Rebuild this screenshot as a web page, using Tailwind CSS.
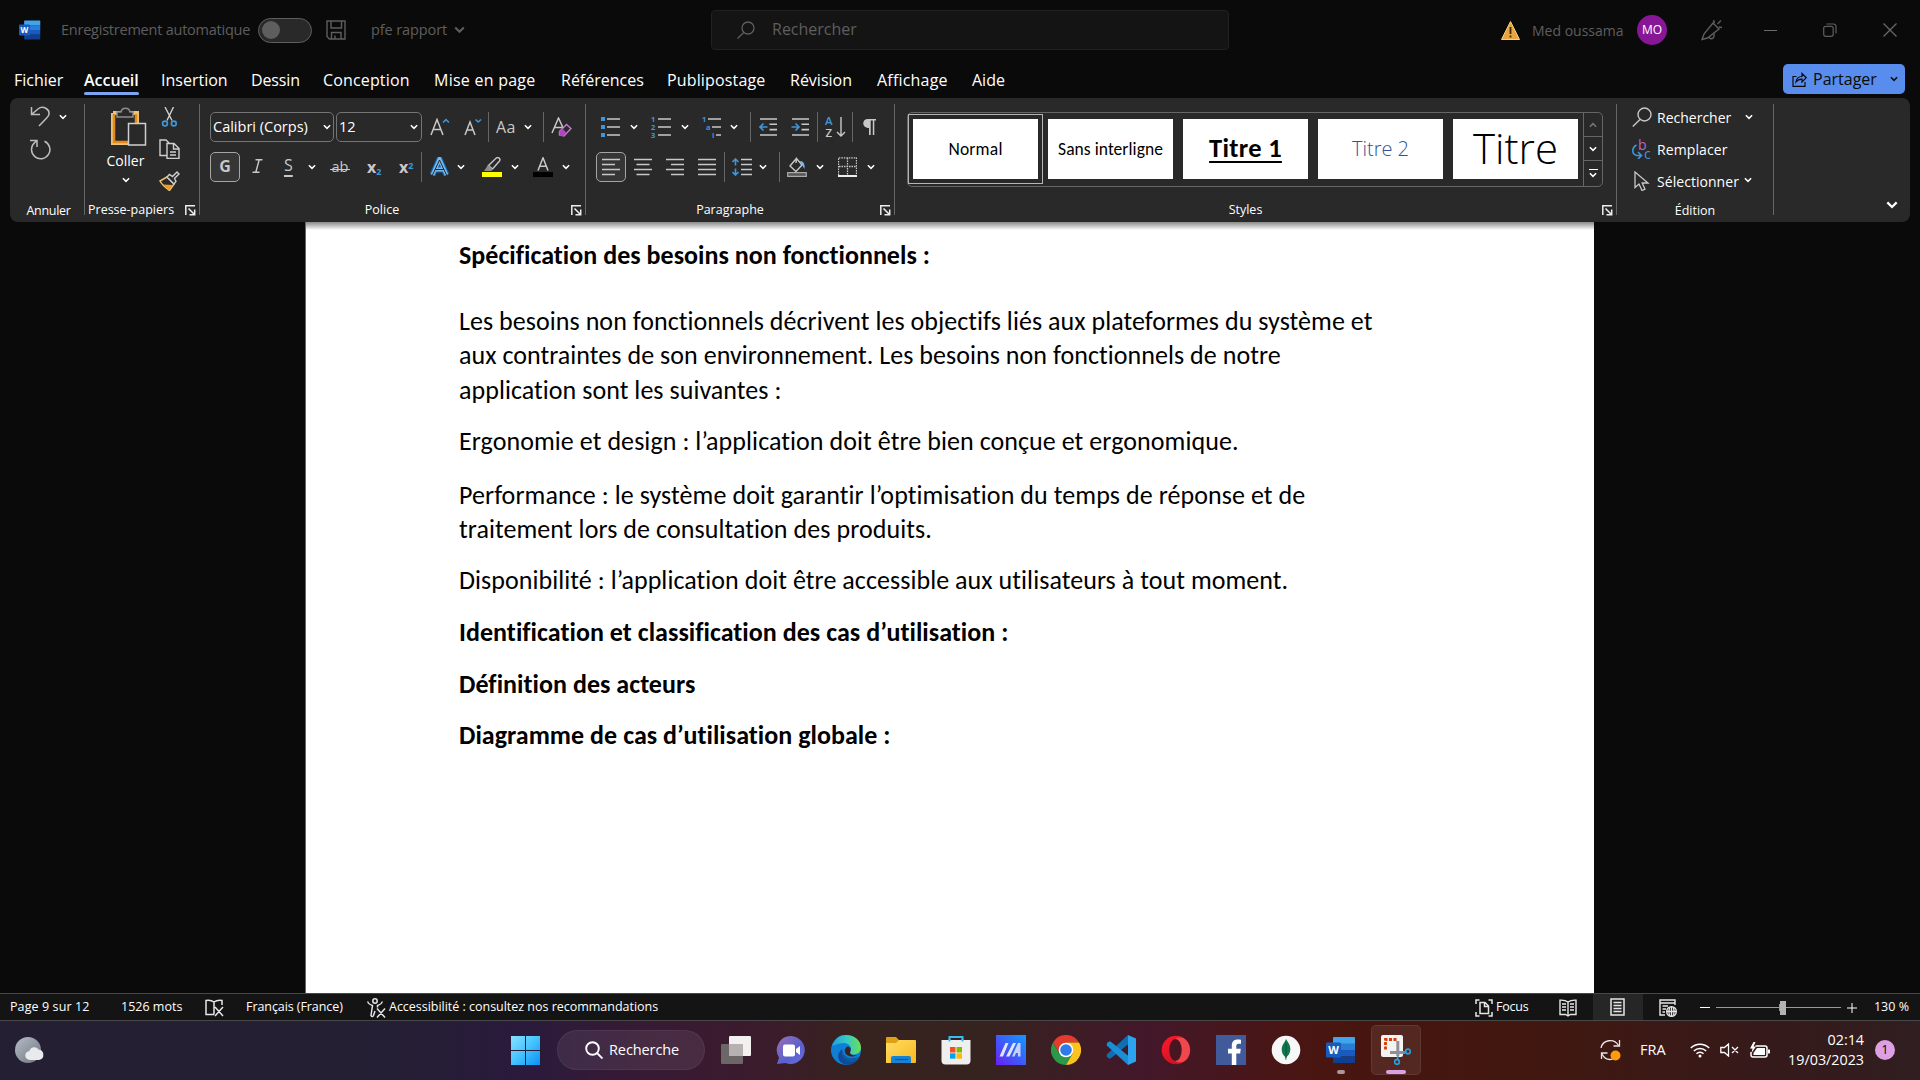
<!DOCTYPE html>
<html lang="fr">
<head>
<meta charset="utf-8">
<title>pfe rapport - Word</title>
<script src="https://cdn.jsdelivr.net/npm/@tailwindcss/browser@4"></script>
</head>
<body class="w-[1920px] h-[1080px] overflow-hidden bg-[#0a0a0a] text-white font-['Open_Sans',sans-serif] whitespace-nowrap flex flex-col">
<svg class="hidden">
  <symbol id="chev" viewBox="0 0 9 6"><path d="M1 1l3.500 3.500L8 1" fill="none" stroke="currentColor" stroke-width="1.700"/></symbol>
  <symbol id="launch" viewBox="0 0 11 11"><path d="M.8 10V.8H10M3.500 3.500l6 6M9.700 4.500v5.200H4.500" fill="none" stroke="#eee" stroke-width="1.500"/></symbol>
  <symbol id="word" viewBox="0 0 30 28">
    <path fill="#41a5ee" d="M8 1h20a1 1 0 0 1 1 1v6H7V2a1 1 0 0 1 1-1z"/><path fill="#2b7cd3" d="M7 7.500h22v7H7z"/><path fill="#185abd" d="M7 14h22v6.500H7z"/><path fill="#103f91" d="M7 20.500h22V26a1 1 0 0 1-1 1H8a1 1 0 0 1-1-1z"/>
    <rect y="6.500" width="15" height="15" rx="1.300" fill="#185abd"/>
    <text x="7.500" y="18" font-size="11" font-weight="700" text-anchor="middle" fill="#fff" font-family="Open Sans, sans-serif">W</text>
  </symbol>
</svg>

<!-- Title bar -->
<header class="h-[60px] flex items-center shrink-0 text-[#5e5e5e] text-[14.5px]">
  <svg class="ml-[19px] w-[22px] h-[22px]"><use href="#word"/></svg>
  <span class="ml-5 w-[197px] tracking-[-0.23px]">Enregistrement automatique</span>
  <span class="w-[54px] h-[25px] rounded-full border border-[#5e5e5e] bg-[#292929] flex items-center pl-[3px]"><i class="w-[18px] h-[18px] rounded-full bg-[#5e5e5e]"></i></span>
  <svg class="ml-[14px] w-5 h-5" viewBox="0 0 20 20" fill="none" stroke="#5e5e5e" stroke-width="1.400"><path d="M1 1h18v18H3.500L1 16.500zM5 1v7h10.500V1M5.500 19v-6.500h9.500V19M9 19v-3.500"/></svg>
  <span class="ml-[25px] w-[83px] tracking-[-0.100px]">pfe rapport</span>
  <svg class="w-[11px] h-[8px]"><use href="#chev"/></svg>
  <div class="ml-[246px] w-[518px] h-10 rounded-[4px] border border-[#212121] bg-[#141414] flex items-center pl-[25px] text-base">
    <svg class="w-[18px] h-[18px]" viewBox="0 0 18 18" fill="none" stroke="#5e5e5e" stroke-width="1.300"><circle cx="11" cy="7" r="6"/><path d="M6.800 11.500L.5 17.500"/></svg>
    <span class="ml-[17px] -mt-0.5">Rechercher</span>
  </div>
  <svg class="ml-[272px] w-[19px] h-[19px]" viewBox="0 0 19 19"><path d="M9.500.5L18.500 18.500H.5z" fill="#eaa43c" stroke="#f5cf86" stroke-width="1"/><path d="M9.500 6v7M9.500 14.500v2" stroke="#3a2a10" stroke-width="1.800"/></svg>
  <span class="ml-3 w-[105px] text-[14px]">Med oussama</span>
  <span class="w-[30px] h-[30px] rounded-full bg-[#881798] text-white text-[12px] flex items-center justify-center">MO</span>
  <svg class="ml-[34px] w-[21px] h-[21px]" viewBox="0 0 21 21" fill="none" stroke="#5e5e5e" stroke-width="1.400"><path d="M12 3L3 14l-2 5.500L6.500 18 18 9zM8 17c1 2.500 4 2.500 5-.5v-3M12.500 0l1 3M20 .5l-3.500 3.500M21 7.500l-3-.5"/></svg>
  <i class="ml-[42px] w-[13px] h-px bg-[#6a6a6a]"></i>
  <svg class="ml-[46px] w-[14px] h-[14px]" viewBox="0 0 14 14" fill="none" stroke="#5e5e5e" stroke-width="1.200"><rect x=".7" y="3.300" width="9.500" height="10" rx="2"/><path d="M3.500 1h7a2.500 2.500 0 0 1 2.500 2.500v7"/></svg>
  <svg class="ml-[46px] w-[14px] h-[14px]" viewBox="0 0 14 14" stroke="#6a6a6a" stroke-width="1.200"><path d="M.5.5l13 13M13.500.5l-13 13"/></svg>
</header>

<!-- Ribbon tabs -->
<nav class="h-[38px] shrink-0 flex items-start pl-[14px] text-base leading-[22px]">
  <span class="mt-[9px] w-[70px]">Fichier</span>
  <span class="mt-[9px] w-[77px] font-semibold">Accueil<i class="block mt-[1px] w-[55px] h-[3px] rounded-full bg-[#7aa5f0]"></i></span>
  <span class="mt-[9px] w-[90px]">Insertion</span>
  <span class="mt-[9px] w-[72px] tracking-[-0.150px]">Dessin</span>
  <span class="mt-[9px] w-[111px] tracking-[0.150px]">Conception</span>
  <span class="mt-[9px] w-[127px] tracking-[0.250px]">Mise en page</span>
  <span class="mt-[9px] w-[106px]">Références</span>
  <span class="mt-[9px] w-[123px] tracking-[0.150px]">Publipostage</span>
  <span class="mt-[9px] w-[87px]">Révision</span>
  <span class="mt-[9px] w-[95px] tracking-[0.200px]">Affichage</span>
  <span class="mt-[9px] flex-1">Aide</span>
  <div class="mt-1 mr-[15px] w-[122px] h-[30px] rounded-[5px] bg-[#588ded] text-[#0a0a0a] flex items-center pl-[9px]">
    <svg class="w-[15px] h-[15px]" viewBox="0 0 15 15" fill="none" stroke="#0a0a0a" stroke-width="1.200"><path d="M4.500 4.500H1v9.800h12V10M4 10c.5-4 3-5.500 6-5.500V1.500l4.300 4.200L10 10V7.200C7.500 7.200 5.500 8 4 10z"/></svg>
    <span class="ml-1.5 w-[77px]">Partager</span>
    <svg class="w-2 h-1.5"><use href="#chev"/></svg>
  </div>
</nav>

<!-- Ribbon -->
<section class="relative z-10 mx-[10px] h-[124px] shrink-0 rounded-lg bg-[#292929] flex items-start">
  <div class="w-[74px] h-full flex flex-col">
    <div class="h-[102px] pt-2 pl-5">
      <div class="flex items-start">
        <svg class="w-5 h-[21px]" viewBox="0 0 20 21" fill="none" stroke="#bdbdbd" stroke-width="1.500"><path d="M1.500 1v7.500H10M1.500 8.500L8 3c5-4 13 .5 10.500 6.500-.5 1.500-2 3-9.500 10.500"/></svg>
        <svg class="ml-[9px] mt-[8px] w-2 h-[6px]"><use href="#chev"/></svg>
      </div>
      <svg class="mt-[12px] w-[21px] h-[21px]" viewBox="0 0 21 21" fill="none" stroke="#bdbdbd" stroke-width="1.500"><path d="M0 1.500h7V8M14.500 2.200A9.200 9.200 0 1 1 4.500 3.800L7 1.500"/></svg>
    </div>
    <div class="h-5 text-[12.5px] leading-[22px] text-center pl-[3px] tracking-[-0.300px]">Annuler</div>
  </div>
  <i class="mt-1.5 w-px h-[111px] bg-[#666]"></i>

  <div class="w-[114px] h-full flex flex-col">
    <div class="h-[102px] flex">
      <div class="w-[74px] pt-[9px] pl-[11px] flex flex-col items-center">
        <svg class="ml-[2px] w-[36px] h-[40px]" viewBox="0 0 36 40" fill="none"><path d="M2 6h24v14M2 6v30h15" stroke="#e9c37c" stroke-width="4"/><path d="M3 7v28h14M25 7v11" stroke="#e58a1a" stroke-width="2.500"/><path d="M6 10V5h4c1-5 8-5 9 0h3v5z" fill="#292929" stroke="#8d8d8d" stroke-width="1.500"/><path d="M17.500 16.500h17v21.500h-17z" fill="#292929" stroke="#cfcfcf" stroke-width="1.500"/></svg>
        <span class="mt-[2px] mr-[4px] text-[14px] leading-6">Coller</span>
        <svg class="mt-[4px] mr-[4px] w-2 h-1.5"><use href="#chev"/></svg>
      </div>
      <div class="pt-[9px] flex flex-col gap-[12px]">
        <svg class="w-[21px] h-5" viewBox="0 0 21 20" fill="none" stroke="#cfcfcf" stroke-width="1.400"><path d="M6 0l7 13.500M14.500 0L8 13.500"/><circle cx="6" cy="16.500" r="2.400" stroke="#3f96da" stroke-width="1.700"/><circle cx="14.800" cy="16.500" r="2.400" stroke="#3f96da" stroke-width="1.700"/></svg>
        <svg class="w-[21px] h-[20px]" viewBox="0 0 21 20" fill="none" stroke="#cfcfcf" stroke-width="1.400"><path d="M7.500 16.500H1V1h6l3 3M8 4.500h7l5 5v10H8zM14.500 4.500V10H20M11 13h6M11 16h6"/></svg>
        <svg class="w-[21px] h-[20px]" viewBox="0 0 21 20" fill="none"><path d="M1 10l7-4 7 7-4.500 6.500C7 17 3 14 1 10z" fill="#292929" stroke="#edc173" stroke-width="1.500"/><path d="M4 13.500l10 .5-4 5z" fill="#f09a28"/><path d="M8 6l2.500-2.500 3 2L18 1l2 2-4.500 4.500 1.500 3L15 13z" fill="#292929" stroke="#cfcfcf" stroke-width="1.400"/></svg>
      </div>
    </div>
    <div class="h-5 text-[12.5px] leading-5 flex items-center pl-[3px]"><span class="w-[97px]">Presse-papiers</span><svg class="w-[11px] h-[11px]"><use href="#launch"/></svg></div>
  </div>
  <i class="mt-1.5 w-px h-[111px] bg-[#666]"></i>

  <!-- Police -->
  <div class="w-[385px] h-full flex flex-col">
    <div class="h-[102px] pt-[14px] pl-[10px] flex flex-col gap-[10px]">
      <div class="h-[30px] flex items-center text-[#c8c8c8]">
        <div class="w-[124px] h-[30px] border border-[#757575] rounded-[5px] flex items-center pl-[2px] text-white text-[14.5px]"><span class="w-[110px]">Calibri (Corps)</span><svg class="w-2 h-1.5"><use href="#chev"/></svg></div>
        <div class="ml-0.5 w-[86px] h-[30px] border border-[#757575] rounded-[5px] flex items-center pl-[2px] text-white text-[14.5px]"><span class="w-[71px]">12</span><svg class="w-2 h-1.5"><use href="#chev"/></svg></div>
        <svg class="ml-2 w-5 h-[18px]" viewBox="0 0 20 18" fill="none"><path d="M1 17L7 1.500 13 17M3.200 11.500h7.700" stroke="#c8c8c8" stroke-width="1.500"/><path d="M13 4.500l3-2.800 3 2.800" stroke="#3f96da" stroke-width="1.600"/></svg>
        <svg class="ml-[14px] w-[18px] h-[18px]" viewBox="0 0 18 18" fill="none"><path d="M1 17L6 4l5 13M3 12h6" stroke="#c8c8c8" stroke-width="1.500"/><path d="M11.500 1.500L14.200 4 17 1.500" stroke="#3f96da" stroke-width="1.600"/></svg>
        <i class="ml-[6px] w-px h-[30px] bg-[#666]"></i>
        <span class="ml-[7px] w-[28px] text-[16px] tracking-[0.500px]">Aa</span><svg class="w-2 h-1.5 text-white"><use href="#chev"/></svg>
        <i class="ml-[11px] w-px h-[30px] bg-[#666]"></i>
        <svg class="ml-[7px] w-[21px] h-5" viewBox="0 0 21 20" fill="none"><path d="M1 16L7.500 1l5.500 12M3.500 10.500h8" stroke="#c8c8c8" stroke-width="1.500"/><path d="M8.500 14.500l7-7 4.500 4-7 7.500-4.500-1z" fill="#292929" stroke="#c678cf" stroke-width="1.500"/><path d="M8.500 14l3-2.500 4 4.500-3 3H9z" fill="#b146c2"/></svg>
      </div>
      <div class="h-[30px] flex items-center text-[#c8c8c8]">
        <div class="w-[30px] h-[30px] rounded-[5px] border border-[#a5a5a5] bg-[#363636] flex items-center justify-center font-bold text-[16px] pb-0.5">G</div>
        <svg class="ml-[12px] w-[11px] h-[14px] -mt-0.5" viewBox="0 0 11 14" fill="none" stroke="#c8c8c8" stroke-width="1.400"><path d="M3.500.7H10.500M.5 13.300H7.500M7.200.7L3.800 13.300"/></svg>
        <span class="ml-[21px] w-[24px] text-[16px] underline underline-offset-4 decoration-2 leading-none -mt-1">S</span>
        <svg class="w-2 h-1.5 text-white"><use href="#chev"/></svg>
        <span class="ml-[14px] w-5 h-5 relative text-[14.5px] leading-5 text-center">ab<i class="absolute inset-x-0 top-[12px] h-px bg-[#c8c8c8]"></i></span>
        <span class="ml-[17px] w-[32px] font-bold text-[16px] leading-none">x<sub class="text-[9px] text-[#3f96da]">2</sub></span>
        <span class="w-[22px] font-bold text-[16px] leading-none">x<sup class="text-[9px] text-[#3f96da]">2</sup></span>
        <i class="w-px h-[30px] bg-[#666]"></i>
        <svg class="ml-[7px] w-[21px] h-[20px]" viewBox="0 0 21 20" fill="none"><path d="M3.500 18L10.500 2l7 16M6 12.500h9" stroke="#1664b0" stroke-width="6"/><path d="M3.500 18L10.500 2l7 16M6 12.500h9" stroke="#74b8f0" stroke-width="3.800"/><path d="M3.500 18L10.500 3l7 15M6 12.500h9" stroke="#292929" stroke-width="1"/></svg>
        <svg class="ml-[7px] w-2 h-1.5 text-white"><use href="#chev"/></svg>
        <svg class="ml-[17px] w-5 h-5" viewBox="0 0 20 20" fill="none"><path d="M6.500 8.500L14.500.8c2-1 4.500 1 3 3.200L10.500 12z" stroke="#c8c8c8" stroke-width="1.400"/><path d="M6 8l5 4.500-2 1.500H2z" fill="#8d8d8d"/><path d="M0 15h20v5H0z" fill="#ff0"/></svg>
        <svg class="ml-[9px] w-2 h-1.5 text-white"><use href="#chev"/></svg>
        <svg class="ml-[14px] w-5 h-5" viewBox="0 0 20 20" fill="none"><path d="M5 13.500L10 .8l5 12.700M6.800 9.200h6.500" stroke="#c8c8c8" stroke-width="1.500"/><path d="M0 15h20v5H0z" fill="#000"/></svg>
        <svg class="ml-[9px] w-2 h-1.5 text-white"><use href="#chev"/></svg>
      </div>
    </div>
    <div class="h-5 text-[12.5px] leading-5 flex items-center"><span class="w-[371px] pr-[7px] text-center">Police</span><svg class="w-[11px] h-[11px]"><use href="#launch"/></svg></div>
  </div>
  <i class="mt-1.5 w-px h-[111px] bg-[#666]"></i>

  <!-- Paragraphe -->
  <div class="w-[308px] h-full flex flex-col">
    <div class="h-[102px] pt-[14px] pl-[10px] flex flex-col gap-[10px]">
      <div class="h-[30px] flex items-center">
        <svg class="ml-[5px] w-[19px] h-5" viewBox="0 0 19 20"><path d="M0 0h4v4H0zM0 8h4v4H0zM0 16h4v4H0z" fill="#3f96da"/><path d="M6 2h13M6 10h13M6 18h13" stroke="#c8c8c8" stroke-width="1.600"/></svg>
        <svg class="ml-[10px] w-2 h-1.5"><use href="#chev"/></svg>
        <svg class="ml-[13px] w-5 h-[24px] overflow-visible" viewBox="0 0 20 24"><g font-size="7.500" font-weight="700" fill="#3f96da" font-family="Open Sans, sans-serif"><text y="7">1</text><text y="15">2</text><text y="23">3</text></g><path d="M7 4h13M7 12h13M7 20h13" stroke="#c8c8c8" stroke-width="1.600"/></svg>
        <svg class="ml-[10px] w-2 h-1.5"><use href="#chev"/></svg>
        <svg class="ml-[13px] w-5 h-[24px] overflow-visible" viewBox="0 0 20 24"><g font-size="7.500" font-weight="700" fill="#3f96da" font-family="Open Sans, sans-serif"><text y="7">1</text><text x="4" y="15">a</text><text x="10" y="23">i</text></g><path d="M6 4h13M10 12h9M14 20h5" stroke="#c8c8c8" stroke-width="1.600"/></svg>
        <svg class="ml-[8px] w-2 h-1.5"><use href="#chev"/></svg>
        <i class="ml-[12px] w-px h-[30px] bg-[#666]"></i>
        <svg class="ml-[8px] w-[19px] h-5" viewBox="0 0 19 20" fill="none"><path d="M1 2h17M10.500 7.300H18M10.500 12.600H18M1 18h17" stroke="#c8c8c8" stroke-width="1.600"/><path d="M8.500 10H1M4.500 6.500L1 10l3.500 3.500" stroke="#3f96da" stroke-width="1.600"/></svg>
        <svg class="ml-[13px] w-[19px] h-5" viewBox="0 0 19 20" fill="none"><path d="M1 2h17M10.500 7.300H18M10.500 12.600H18M1 18h17" stroke="#c8c8c8" stroke-width="1.600"/><path d="M.5 10H8M4.500 6.500L8 10l-3.500 3.500" stroke="#3f96da" stroke-width="1.600"/></svg>
        <i class="ml-[7px] w-px h-[30px] bg-[#666]"></i>
        <svg class="ml-[7px] w-[21px] h-[24px] overflow-visible" viewBox="0 0 21 24"><g font-size="11.500" font-weight="600" font-family="Open Sans, sans-serif"><text y="10" fill="#3f96da">A</text><text x=".5" y="22" fill="#c8c8c8">Z</text></g><path d="M16 2v19M12 17l4 4 4-4" fill="none" stroke="#c8c8c8" stroke-width="1.400"/></svg>
        <i class="ml-[6px] w-px h-[30px] bg-[#666]"></i>
        <svg class="ml-[10px] w-[13px] h-4" viewBox="0 0 13 16"><path d="M13 0v1.500h-1.700V16H9.800V1.500H7.700V16H6V9C-1.500 9-1.500 0 5 0z" fill="#c8c8c8"/></svg>
      </div>
      <div class="h-[30px] flex items-center">
        <div class="w-[30px] h-[30px] rounded-[5px] border border-[#a5a5a5] bg-[#363636] flex items-center justify-center"><svg class="w-[18px] h-[18px]" viewBox="0 0 18 18" stroke="#c8c8c8" stroke-width="1.600"><path d="M0 1.500h18M0 6.500h13M0 11.500h18M0 16.500h13"/></svg></div>
        <svg class="ml-[8px] w-[18px] h-[18px]" viewBox="0 0 18 18" stroke="#c8c8c8" stroke-width="1.600"><path d="M0 1.500h18M2.500 6.500h13M0 11.500h18M2.500 16.500h13"/></svg>
        <svg class="ml-[14px] w-[18px] h-[18px]" viewBox="0 0 18 18" stroke="#c8c8c8" stroke-width="1.600"><path d="M0 1.500h18M5 6.500h13M0 11.500h18M5 16.500h13"/></svg>
        <svg class="ml-[14px] w-[18px] h-[18px]" viewBox="0 0 18 18" stroke="#c8c8c8" stroke-width="1.600"><path d="M0 1.500h18M0 6.500h18M0 11.500h18M0 16.500h18"/></svg>
        <i class="ml-[8px] w-px h-[30px] bg-[#666]"></i>
        <svg class="ml-[7px] w-5 h-[18px]" viewBox="0 0 20 18" fill="none"><path d="M9 1.500h11M9 6.500h11M9 11.500h11M9 16.500h11" stroke="#c8c8c8" stroke-width="1.600"/><path d="M3.500 7.500V1M.5 4l3-3 3 3M3.500 10.500V17M.5 14l3 3 3-3" stroke="#3f96da" stroke-width="1.600"/></svg>
        <svg class="ml-[7px] w-2 h-1.5"><use href="#chev"/></svg>
        <i class="ml-[12px] w-px h-[30px] bg-[#666]"></i>
        <svg class="ml-[7px] w-[20px] h-[20px]" viewBox="0 0 20 20" fill="none"><path d="M8 3l-5 6 6 5.500L15 8 9.500 1.500 9 6M9.500 1.500L8 3" stroke="#c8c8c8" stroke-width="1.400"/><path d="M13 4c3 0 5 2 4.500 8L15 8z" fill="#74b8f0"/><path d="M.7 15.700h18.600v3.600H.7z" fill="#555" stroke="#aaa" stroke-width="1.200"/></svg>
        <svg class="ml-[9px] w-2 h-1.5"><use href="#chev"/></svg>
        <svg class="ml-[14px] w-[19px] h-[20px]" viewBox="0 0 19 20" fill="none" stroke="#c8c8c8"><path d="M.5 18V.8h18V18M9.500 1v17M1 9.500h17" stroke-width="1.300" stroke-dasharray="1.500 1"/><path d="M0 19h19" stroke="#eee" stroke-width="2"/></svg>
        <svg class="ml-[10px] w-2 h-1.5"><use href="#chev"/></svg>
      </div>
    </div>
    <div class="h-5 text-[12.5px] leading-5 flex items-center"><span class="w-[294px] pr-[6px] text-center">Paragraphe</span><svg class="w-[11px] h-[11px]"><use href="#launch"/></svg></div>
  </div>
  <i class="mt-1.5 w-px h-[111px] bg-[#666]"></i>

  <!-- Styles -->
  <div class="w-[721px] h-full flex flex-col">
    <div class="h-[102px] pt-[14px] pl-[12px]">
      <div class="w-[696px] h-[75px] rounded-[5px] border border-[#666] flex items-start text-black font-['Carlito','Lato',sans-serif]">
        <div class="mt-[1px] w-[135px] h-[70px] border border-[#b5b5b5] p-1"><div class="h-full bg-white flex items-center justify-center text-[17.500px] tracking-[0.200px]">Normal</div></div>
        <div class="ml-[5px] mt-[6px] w-[125px] h-[60px] bg-white flex items-center justify-center text-[17.500px] tracking-[0.050px]">Sans interligne</div>
        <div class="ml-[10px] mt-[6px] w-[125px] h-[60px] bg-white flex items-center justify-center text-[26.500px] tracking-[0.300px] font-bold underline decoration-2 underline-offset-4">Titre 1</div>
        <div class="ml-[10px] mt-[6px] w-[125px] h-[60px] bg-white flex items-center justify-center text-[20px] font-light text-[#2f5597] font-['Open_Sans',sans-serif]">Titre 2</div>
        <div class="ml-[10px] mt-[6px] w-[125px] h-[60px] bg-white flex items-center justify-center text-[42px] leading-none pb-[3px] font-light font-['Open_Sans',sans-serif]">Titre</div>
        <div class="ml-[5px] w-[19px] h-full border-l border-[#666] text-white grid grid-rows-[24px_24px_1fr] divide-y divide-[#666]">
          <span class="flex items-center justify-center"><svg class="w-2 h-1.5 rotate-180 text-[#777]"><use href="#chev"/></svg></span>
          <span class="flex items-center justify-center"><svg class="w-2 h-1.5"><use href="#chev"/></svg></span>
          <span class="flex flex-col items-center justify-center gap-[2px]"><i class="w-[9px] h-[1.500px] bg-white"></i><svg class="w-2 h-1.5"><use href="#chev"/></svg></span>
        </div>
      </div>
    </div>
    <div class="h-5 text-[12.5px] leading-5 flex items-center"><span class="w-[707px] pr-[6px] text-center">Styles</span><svg class="w-[11px] h-[11px]"><use href="#launch"/></svg></div>
  </div>
  <i class="mt-1.5 w-px h-[111px] bg-[#666]"></i>

  <!-- Édition -->
  <div class="w-[156px] h-full flex flex-col text-[14px]">
    <div class="h-[102px] pt-[3px] pl-[15px] flex flex-col">
      <div class="h-8 flex items-center"><svg class="w-5 h-5" viewBox="0 0 20 20" fill="none" stroke="#c8c8c8" stroke-width="1.400"><circle cx="12.500" cy="7.500" r="6.500"/><path d="M8 12.500L.8 19.500"/></svg><span class="ml-[5px] w-[88px]">Rechercher</span><svg class="w-2 h-1.5"><use href="#chev"/></svg></div>
      <div class="h-8 flex items-center"><svg class="w-5 h-5" viewBox="0 0 20 20"><g font-size="14" font-family="Open Sans, sans-serif"><text x="6" y="10.500" fill="#b968c4">b</text><text x="12" y="19.500" fill="#3f96da">c</text></g><path d="M4.500 6C-.5 9-.5 15.500 5 16.500h4M6 13l3.500 3.500L6 20" fill="none" stroke="#3f96da" stroke-width="1.600"/></svg><span class="ml-[5px] tracking-[0.100px]">Remplacer</span></div>
      <div class="h-8 flex items-center"><svg class="w-5 h-5" viewBox="0 0 20 20" fill="none" stroke="#c8c8c8" stroke-width="1.300"><path d="M3 1v15.500l4-3.500 3 6.500 3-1.300L10.200 12H16z"/></svg><span class="ml-[5px] w-[87px] tracking-[0.050px]">Sélectionner</span><svg class="w-2 h-1.5 -mt-0.5"><use href="#chev"/></svg></div>
    </div>
    <div class="h-5 text-[12.5px] leading-[22px] text-center">Édition</div>
  </div>
  <i class="mt-1.5 w-px h-[111px] bg-[#666]"></i>
  <svg class="ml-auto mr-[12px] mt-[103px] w-[12px] h-2"><use href="#chev"/></svg>
</section>

<!-- Document -->
<main class="flex-1 flex">
  <article class="relative ml-[305px] w-[1289px] bg-white border-l border-[#666] pl-[153px] pt-[16px] text-black text-[26px] leading-[34px] font-['Carlito','Lato',sans-serif] [font-variant-ligatures:none]">
    <i class="absolute left-0 right-0 top-0 h-2 bg-linear-to-b from-[#8a8a8a] to-white"></i>
    <h2 class="font-bold tracking-[0.030px]">Spécification des besoins non fonctionnels :</h2>
    <p class="mt-8 leading-[34.300px] tracking-[0.050px]">Les besoins non fonctionnels décrivent les objectifs liés aux plateformes du système et<br>aux contraintes de son environnement. Les besoins non fonctionnels de notre<br>application sont les suivantes :</p>
    <p class="mt-[17px] tracking-[0.070px]">Ergonomie et design : l’application doit être bien conçue et ergonomique.</p>
    <p class="mt-5 tracking-[0.078px]">Performance : le système doit garantir l’optimisation du temps de réponse et de<br>traitement lors de consultation des produits.</p>
    <p class="mt-[17px] tracking-[0.060px]">Disponibilité : l’application doit être accessible aux utilisateurs à tout moment.</p>
    <h2 class="mt-[18px] font-bold tracking-[0.040px]">Identification et classification des cas d’utilisation :</h2>
    <h2 class="mt-[18px] font-bold tracking-[0.040px]">Définition des acteurs</h2>
    <h2 class="mt-[17px] font-bold tracking-[0.040px]">Diagramme de cas d’utilisation globale :</h2>
  </article>
</main>

<!-- Status bar -->
<div class="h-[28px] shrink-0 bg-[#141414] border-y border-[#484848] flex items-center text-[12.5px] pl-[10px] pt-px">
  <span class="w-[111px] tracking-[0.100px]">Page 9 sur 12</span>
  <span class="w-[84px]">1526 mots</span>
  <svg class="w-5 h-[18px]" viewBox="0 0 20 18" fill="none" stroke="#e6e6e6" stroke-width="1.500"><path d="M9 15.500V3C7 1.500 5 1 1 1.500v14h8M9 3c2-1.500 4-2 8-1.500V6M10 8l8 9M18 8l-8 9"/></svg>
  <span class="ml-[21px] w-[121px] tracking-[-0.070px]">Français (France)</span>
  <svg class="w-[19px] h-5" viewBox="0 0 19 20" fill="none" stroke="#e6e6e6" stroke-width="1.500"><circle cx="8" cy="3" r="2.200"/><path d="M1 3.500c-.5 2 2 3 4.500 4L4 17.500c1 1.500 2 1 2.500 0L8 13M15 3.500c.5 2-2 3-4.500 4v2M10 10.500l8 9M18 10.500l-8 9"/></svg>
  <span class="ml-[3px] flex-1 tracking-[-0.020px]">Accessibilité : consultez nos recommandations</span>
  <svg class="w-[18px] h-[18px]" viewBox="0 0 18 18" fill="none" stroke="#e6e6e6" stroke-width="1.500"><path d="M1 5V1h3.500M13.500 1H17v4M17 13v4h-3.500M4.500 17H1v-4M5 3.500h5l3.500 3.500v7.500H5zM9.500 3.500V7.500h4"/></svg>
  <span class="ml-[3px] w-[63px] tracking-[-0.200px]">Focus</span>
  <svg class="w-[18px] h-[18px]" viewBox="0 0 18 18" fill="none" stroke="#e6e6e6" stroke-width="1.400"><path d="M9 3C7 1.500 5 1 1 1.200v14.300h5.500L9 17l2.500-1.500H17V1.200C13 1 11 1.500 9 3zM9 3v14M3 5h4M3 8h4M3 11h4M11 5h4M11 8h4M11 11h4"/></svg>
  <div class="ml-4 -mt-px w-[50px] h-[26px] bg-[#262626] flex items-center justify-center"><svg class="w-[15px] h-[18px]" viewBox="0 0 15 18" fill="none" stroke="#e6e6e6" stroke-width="1.500"><path d="M1 1h13v16H1zM3.500 4.500h8M3.500 7.500h8M3.500 10.500h8M3.500 13.500h8"/></svg></div>
  <svg class="ml-4 w-[18px] h-[18px]" viewBox="0 0 18 18" fill="none" stroke="#e6e6e6" stroke-width="1.400"><path d="M6 16H1V1h15v5M1 4h15M3.500 7H9M3.500 10H7M3.500 13H6"/><circle cx="12.500" cy="12.500" r="4.800"/><path d="M12.500 8v9M8 12.500h9M10.500 8.500c-1 3-1 5 0 8M14.500 8.500c1 3 1 5 0 8"/></svg>
  <i class="ml-[23px] w-[10px] h-px bg-white"></i>
  <div class="ml-[6px] w-[125px] flex items-center"><i class="w-[63px] h-px bg-[#999]"></i><i class="w-px h-[7px] bg-[#999]"></i><i class="w-[6px] h-[14px] bg-[#b3b3b3]"></i><i class="flex-1 h-px bg-[#999]"></i></div>
  <svg class="ml-[6px] w-[10px] h-[10px]" viewBox="0 0 10 10" stroke="#fff"><path d="M0 5h10M5 0v10"/></svg>
  <span class="ml-[17px] mr-[11px]">130 %</span>
</div>

<!-- Taskbar -->
<footer class="h-[59px] shrink-0 flex items-center pb-px bg-[linear-gradient(90deg,#251f33_0,#251f35_400px,#2a1a3c_520px,#371a35_640px,#3b1b2c_760px,#37221f_850px,#35231f_980px,#42182a_1140px,#481618_1260px,#48150f_1340px,#401811_1560px,#351a1b_1780px,#301e20_1920px)]">
  <svg class="ml-[14px] w-[30px] h-[28px]" viewBox="0 0 30 28"><defs><linearGradient id="moon" x2="1" y2="1"><stop stop-color="#b7bdc8"/><stop offset="1" stop-color="#6c747c"/></linearGradient></defs><circle cx="14" cy="14" r="13" fill="url(#moon)"/><path d="M16 24a4.500 4.500 0 0 1-.5-9 5 5 0 0 1 9-1.500A5.300 5.300 0 0 1 25 24z" fill="#e8eaee"/></svg>
  <svg class="ml-[467px] w-[29px] h-[29px]" viewBox="0 0 29 29"><defs><linearGradient id="win" x2="1" y2="1"><stop stop-color="#8ae2ff"/><stop offset=".5" stop-color="#44c3fd"/><stop offset="1" stop-color="#0a90f5"/></linearGradient></defs><path d="M0 0h14v14H0zM15 0h14v14H15zM0 15h14v14H0zM15 15h14v14H15z" fill="url(#win)"/></svg>
  <div class="ml-[17px] mr-[3px] w-[148px] h-10 rounded-full bg-white/8 border border-white/5 flex items-center pl-[27px] text-[14.500px]">
    <svg class="w-[18px] h-[18px]" viewBox="0 0 18 18" fill="none" stroke="#fff" stroke-width="1.900"><circle cx="7.500" cy="7.500" r="6.300"/><path d="M12 12l5.500 5.500"/></svg><span class="ml-[6px] tracking-[-0.100px]">Recherche</span>
  </div>
  <!-- Affichage des tâches -->
  <div class="w-[55px] flex justify-center"><svg class="w-[30px] h-[30px]" viewBox="0 0 30 30"><rect x="8" y="1" width="22" height="20" rx="1" fill="#f2f0f0"/><rect y="9" width="22" height="20" rx="1" fill="#6a6766"/><path d="M8 9h14v12H8z" fill="#b5b2b1"/></svg></div>
  <!-- Conversation -->
  <div class="w-[55px] flex justify-center"><svg class="w-[30px] h-[30px]" viewBox="0 0 30 30"><defs><linearGradient id="chat" x2="1" y2="1"><stop stop-color="#9a6fb5"/><stop offset=".6" stop-color="#5a60cf"/><stop offset="1" stop-color="#6a6fe0"/></linearGradient></defs><path d="M15 1a14 14 0 1 1-5.500 27L1 29l2-6.500A14 14 0 0 1 15 1z" fill="url(#chat)"/><rect x="7" y="9.500" width="12" height="12" rx="2" fill="#fff"/><path d="M20 14l4-3v9l-4-3z" fill="#fff"/></svg></div>
  <!-- Edge -->
  <div class="w-[55px] flex justify-center"><svg class="w-[30px] h-[30px]" viewBox="0 0 30 30"><defs><linearGradient id="e1"><stop stop-color="#1fa0d8"/><stop offset=".5" stop-color="#35c8c8"/><stop offset="1" stop-color="#6be052"/></linearGradient></defs><circle cx="15" cy="15" r="15" fill="#0f7fd6"/><path d="M1 11C4 3 9 0 15 0c9 0 15 6 15 12.500 0 5-4 7-7.500 7-3 0-4.500-1.500-3-3.500 2-4-2-8-6.500-8-6 0-10 3-12 3z" fill="url(#e1)"/><path d="M11 16c0 8 6 12 15 8.500C22 32 11 31 8 25c-2-4-.5-8 3-11z" fill="#114a94"/><path d="M12 14c-1 6 4 10 10 9 3 0 5-1 6-2-2 5-7 7-11 5-5-2-7-8-5-12z" fill="#0c59a4"/><path d="M15.500 12c-3 3-2 7.500 2.500 9 3 1 6 .5 8-1-5 1-8-1-6.500-4 1-2-1-5-4-4z" fill="#3a2225"/></svg></div>
  <!-- Explorateur -->
  <div class="w-[55px] flex justify-center"><svg class="w-[30px] h-[30px]" viewBox="0 0 30 30"><defs><linearGradient id="fo" x2="1" y2="1"><stop stop-color="#ffdd66"/><stop offset="1" stop-color="#f8b81c"/></linearGradient></defs><path d="M0 3a1 1 0 0 1 1-1h9l3 3h8v5H0z" fill="#e0a013"/><path d="M0 8h10l3-3h16a1 1 0 0 1 1 1v21a1 1 0 0 1-1 1H0z" fill="url(#fo)"/><path d="M5 28v-5a2 2 0 0 1 2-2h16a2 2 0 0 1 2 2v5z" fill="#1783d4"/><path d="M9 24.500h13" stroke="#0c56a0" stroke-width="1.200"/></svg></div>
  <!-- Store -->
  <div class="w-[55px] flex justify-center"><svg class="w-[30px] h-[30px]" viewBox="0 0 30 30"><path d="M8.500 7V2h13v5" fill="none" stroke="#35bdf2" stroke-width="2"/><path d="M.5 5h29v20.500a4 4 0 0 1-4 4h-21a4 4 0 0 1-4-4z" fill="#f0efef"/><path d="M8.500 6.500V4M21.500 6.500V4" stroke="#35bdf2" stroke-width="2"/><path d="M9 12h5.500v5.500H9z" fill="#f25022"/><path d="M15.500 12H21v5.500h-5.500z" fill="#7fba00"/><path d="M9 18.300h5.500v5.400H9z" fill="#00a4ef"/><path d="M15.500 18.300H21v5.400h-5.500z" fill="#ffb900"/></svg></div>
  <!-- MyASUS -->
  <div class="w-[55px] flex justify-center"><svg class="w-[30px] h-[30px]" viewBox="0 0 30 30"><defs><linearGradient id="as" x1="0" y1="1" x2="1" y2="0"><stop stop-color="#6a20f5"/><stop offset="1" stop-color="#109bff"/></linearGradient></defs><path d="M0 0h30v30H0z" fill="url(#as)"/><path d="M3.500 21.500L9.500 8h3L7 21.500zM10 21.500L17 8h3l-6.500 13.500z" fill="#dfe6ff"/><path d="M16 21.500L22 8h2.500v13.500H22V18h-2l-1.500 3.500z" fill="#c5d2ff"/></svg></div>
  <!-- Chrome -->
  <div class="w-[55px] flex justify-center"><svg class="w-[30px] h-[30px]" viewBox="0 0 30 30"><path d="M2 7.500A15 15 0 0 1 28 7.500H15L8.500 18.750z" fill="#e33b2e"/><path d="M2 7.500A15 15 0 0 0 15 30l6.500-11.250h-13z" fill="#2a9a48"/><path d="M28 7.500A15 15 0 0 1 15 30l6.500-11.250L15 7.500z" fill="#fcc31e"/><circle cx="15" cy="15" r="7.300" fill="#fff"/><circle cx="15" cy="15" r="5.800" fill="#2f7bea"/></svg></div>
  <!-- VS Code -->
  <div class="w-[55px] flex justify-center"><svg class="w-[30px] h-[30px]" viewBox="0 0 30 30"><path d="M22 0L.8 19.500v2.200L3 23.500h1.500L22.500 9z" fill="#0f6fb3"/><path d="M22 30L.8 10.500V8.300L3 6.500h1.500L22.500 21z" fill="#1a8fd8"/><path d="M22 0l8 3.500v23L22 30z" fill="#2ba3ee"/></svg></div>
  <!-- Opera -->
  <div class="w-[55px] flex justify-center"><svg class="w-[30px] h-[30px]" viewBox="0 0 30 30"><defs><linearGradient id="op" x2="1" y2="1"><stop stop-color="#ff1b2d"/><stop offset="1" stop-color="#c00d1e"/></linearGradient></defs><circle cx="15" cy="15" r="14.300" fill="url(#op)"/><path d="M14 4c8-5 15 3 15 11s-7 16-15 11z" fill="#f0474c"/><ellipse cx="14.500" cy="15" rx="6.200" ry="11" fill="#471620"/></svg></div>
  <!-- Facebook -->
  <div class="w-[55px] flex justify-center"><svg class="w-[30px] h-[30px]" viewBox="0 0 30 30"><path d="M0 0h30v30H0z" fill="#415a99"/><path d="M15.800 30V18.500H12v-4.700h3.800v-3.300c0-4 2.400-6 5.800-6 1.600 0 2.800.1 3.400.2v4.100h-2.300c-1.900 0-2.400 1-2.400 2.300v2.700h4.500l-.6 4.700h-3.900V30z" fill="#fff"/></svg></div>
  <!-- MongoDB -->
  <div class="w-[55px] flex justify-center"><svg class="w-[30px] h-[30px]" viewBox="0 0 30 30"><circle cx="15" cy="15" r="14.300" fill="#f7f7f7"/><path d="M15 4c2 3.500 4.800 6 4.300 11-.3 3.500-2 5.500-3.800 7l-.3 3h-.6l-.4-3c-2-1.800-3.500-4-3.500-7.500C10.700 10 13.500 8 15 4z" fill="#11774a"/><path d="M15 8v15" stroke="#0a4f35" stroke-width=".8"/></svg></div>
  <!-- Word -->
  <div class="relative w-[55px] flex justify-center"><svg class="w-[30px] h-[30px]"><use href="#word"/></svg><i class="absolute left-[24px] top-[35px] w-2 h-1 rounded-full bg-[#a9989a]"></i></div>
  <!-- Outil Capture d’écran -->
  <div class="relative ml-[3px] w-[50px] h-[50px] rounded-[5px] bg-white/8 border border-white/8 flex items-center justify-center"><svg class="w-[30px] h-[30px]" viewBox="0 0 30 30" fill="none"><rect width="22" height="22" rx="2" fill="#f3f3f3"/><path d="M15.500 4.500H4.500V16" stroke="#d83b01" stroke-width="2.800" stroke-dasharray="3 1.500"/><path d="M16.800 6v15M9 17.500h15" stroke="#8d9196" stroke-width="3"/><circle cx="27" cy="16.500" r="2.300" stroke="#27a0e0" stroke-width="1.700"/><circle cx="16" cy="27" r="2.300" stroke="#27a0e0" stroke-width="1.700"/><path d="M22 18l3-.8M16.500 25l.3-4" stroke="#27a0e0" stroke-width="1.700"/></svg><i class="absolute left-[14px] top-[44px] w-5 h-1 rounded-full bg-[#dda0e4]"></i></div>
  <svg class="ml-auto w-[21px] h-[22px]" viewBox="0 0 21 22" fill="none" stroke="#e8e4e4" stroke-width="1.300"><path d="M1 9C2.500 1 14 -1.500 18.500 6.500M19.500 1v6h-6M13 20c-5 1.500-9-1-11-5M1.500 20v-6h6"/><circle cx="15.500" cy="16.500" r="5" fill="#ff9a0a" stroke="none"/></svg>
  <span class="ml-[19px] w-[50px] text-[14.500px]">FRA</span>
  <svg class="w-5 h-[16px]" viewBox="0 0 20 16" fill="none" stroke="#fff" stroke-width="1.500"><path d="M.8 6a13 13 0 0 1 18.400 0M3.800 9a8.800 8.800 0 0 1 12.400 0M6.500 11.800a5 5 0 0 1 7 0"/><circle cx="10" cy="14" r="1.500" fill="#fff" stroke="none"/></svg>
  <svg class="ml-[10px] w-[19px] h-[14px]" viewBox="0 0 19 14" fill="none" stroke="#fff" stroke-width="1.300"><path d="M8.500 1v12L4.500 9.500H.8v-5h3.700zM12 4l6 6M18 4l-6 6"/></svg>
  <svg class="ml-[11px] w-5 h-[17px]" viewBox="0 0 20 17"><path d="M5.500 4H15a2 2 0 0 1 2 2v7a2 2 0 0 1-2 2H3a2 2 0 0 1-2-2v-3" fill="none" stroke="#fff" stroke-width="1.500"/><path d="M7 6h8v7H3.500v-2zM18 7.500h1.500a.8.800 0 0 1 .5.800v2.500a.8.800 0 0 1-.5.700H18zM3.500 0L0 6.500h2.500L1.500 11 6 4.500H3.500L5.500 0z" fill="#fff"/></svg>
  <div class="ml-[17px] w-[77px] text-right text-[14.300px] leading-5 pb-px">02:14<br>19/03/2023</div>
  <span class="ml-[11px] mr-[25px] w-5 h-5 rounded-full bg-[#dda0e4] text-black text-[12px] leading-5 text-center">1</span>
</footer>
</body>
</html>
